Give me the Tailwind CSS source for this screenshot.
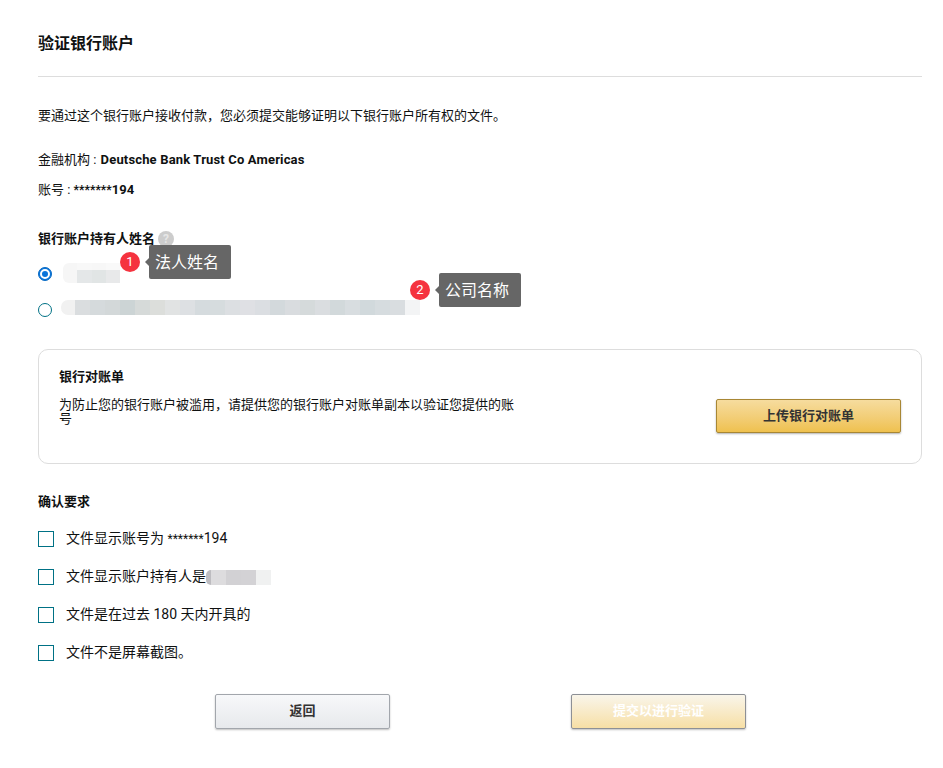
<!DOCTYPE html>
<html lang="zh">
<head>
    <meta charset="UTF-8">
    <meta name="viewport" content="width=device-width, initial-scale=1.0">
    <title>验证银行账户</title>
    <script src="https://cdn.jsdelivr.net/npm/@tailwindcss/browser@4"></script>
</head>
<body class="bg-white text-[#0f1111] font-['Roboto','Noto_Sans_CJK_SC',sans-serif] text-[13px]">
    <div class="relative h-[768px] overflow-hidden pl-[38px] pr-[21px]">
        <!-- Header -->
        <div class="h-[77px] border-b border-[#dddddd] pt-[33px]">
            <h1 class="text-[16px] leading-[22px] font-bold">验证银行账户</h1>
        </div>

        <p class="mt-[29px] leading-[19px]">要通过这个银行账户接收付款，您必须提交能够证明以下银行账户所有权的文件。</p>
        <p class="mt-[25px] leading-[19px]">金融机构 : <b class="ml-px tracking-[0.16px]">Deutsche Bank Trust Co Americas</b></p>
        <p class="mt-[11px] leading-[19px]">账号 : <b><span class="text-[12px]">*******</span>194</b></p>

        <!-- Holder name -->
        <div class="mt-[29px] flex items-center h-[19px]">
            <span class="font-bold">银行账户持有人姓名</span>
            <span class="ml-[3px] w-[16px] h-[16px] rounded-full bg-[#cccccc] text-[#e6e6e6] text-[12px] leading-[16px] font-bold text-center">?</span>
        </div>
        <div class="mt-[8px] h-[35px] flex items-center">
            <span class="w-[14px] h-[14px] rounded-full bg-[#0a74da] border border-[#0a6cc4] flex items-center justify-center">
                <span class="w-[10px] h-[10px] rounded-full border-[2px] border-white bg-[#0a74da]"></span>
            </span>
            <div class="ml-[11px] mb-[2px] flex flex-col">
                <div class="flex h-[7px]">
                    <i class="w-[14px] rounded-tl-[6px] bg-[#f6f6f6]"></i><i class="w-[15px] bg-[#f8f8f8]"></i><i class="w-[14px] bg-[#f7f7f7]"></i><i class="w-[14px] bg-[#f9f9f9]"></i>
                </div>
                <div class="flex h-[13px]">
                    <i class="w-[14px] rounded-bl-[6px] bg-[#f6f6f6]"></i><i class="w-[15px] bg-[#e4e7e8]"></i><i class="w-[14px] bg-[#e1e5e5]"></i><i class="w-[14px] bg-[#e8e9ea]"></i>
                </div>
            </div>
        </div>
        <div class="mt-[1px] h-[35px] flex items-center">
            <span class="w-[14px] h-[14px] rounded-full bg-white border border-[#007185]"></span>
            <div class="ml-[9px] mb-[4px] flex h-[15px]">
                <i class="w-[14px] rounded-l-[7px] bg-[#f1f1f1]"></i><i class="w-[15px] bg-[#dadddf]"></i><i class="w-[15px] bg-[#d5dadc]"></i><i class="w-[15px] bg-[#d3d8d9]"></i><i class="w-[15px] bg-[#ccd4d5]"></i><i class="w-[15px] bg-[#d6dad9]"></i><i class="w-[15px] bg-[#dcdedb]"></i><i class="w-[15px] bg-[#e1e3e3]"></i><i class="w-[15px] bg-[#dde0e3]"></i><i class="w-[15px] bg-[#d5dbde]"></i><i class="w-[15px] bg-[#d6dcde]"></i><i class="w-[15px] bg-[#dcdfe2]"></i><i class="w-[15px] bg-[#dfe0e4]"></i><i class="w-[15px] bg-[#dbdee2]"></i><i class="w-[15px] bg-[#d3d9dc]"></i><i class="w-[15px] bg-[#d9dcdf]"></i><i class="w-[15px] bg-[#d5dadb]"></i><i class="w-[15px] bg-[#dadde0]"></i><i class="w-[15px] bg-[#d2d9db]"></i><i class="w-[15px] bg-[#d8dde0]"></i><i class="w-[15px] bg-[#d1d9dc]"></i><i class="w-[15px] bg-[#d6dcdf]"></i><i class="w-[15px] bg-[#d9dde0]"></i><i class="w-[15px] bg-[#f3f4f5]"></i>
            </div>
        </div>

        <!-- Statement card -->
        <div class="mt-[22px] h-[115px] rounded-[10px] border border-[#dddddd] flex justify-between pl-[20px] pr-[20px]">
            <div class="w-[458px] pt-[17px]">
                <h2 class="font-bold leading-[19px]">银行对账单</h2>
                <p class="mt-[12px] leading-[14px] break-all">为防止您的银行账户被滥用，请提供您的银行账户对账单副本以验证您提供的账号</p>
            </div>
            <button class="mt-[49px] w-[185px] h-[34px] rounded-[2px] border border-[#a88734] bg-linear-to-b from-[#f6dc9e] to-[#efc14e] shadow-[0_1px_2px_rgba(0,0,0,0.3)] font-bold text-[#333333]">上传银行对账单</button>
        </div>

        <!-- Requirements -->
        <h2 class="mt-[28px] font-bold leading-[19px]">确认要求</h2>
        <div class="mt-[9px] flex flex-col text-[14px]">
            <label class="h-[38px] flex items-center">
                <span class="w-[16px] h-[16px] border border-[#007185]"></span>
                <span class="ml-[12px] mb-[2px]">文件显示账号为 <span class="text-[12px]">*******</span>194</span>
            </label>
            <label class="h-[38px] flex items-center">
                <span class="w-[16px] h-[16px] border border-[#007185]"></span>
                <span class="ml-[12px] mb-[2px]">文件显示账户持有人是</span>
                <span class="flex h-[15px]">
                    <i class="w-[5px] rounded-l-[5px] bg-[#bdbcc0]"></i><i class="w-[15px] bg-[#dddcde]"></i><i class="w-[15px] bg-[#d2d1d4]"></i><i class="w-[15px] bg-[#d3d2d5]"></i><i class="w-[15px] bg-[#f0f1f1]"></i>
                </span>
            </label>
            <label class="h-[38px] flex items-center">
                <span class="w-[16px] h-[16px] border border-[#007185]"></span>
                <span class="ml-[12px] mb-[2px]">文件是在过去 180 天内开具的</span>
            </label>
            <label class="h-[38px] flex items-center">
                <span class="w-[16px] h-[16px] border border-[#007185]"></span>
                <span class="ml-[12px] mb-[2px]">文件不是屏幕截图。</span>
            </label>
        </div>

        <!-- Footer buttons -->
        <div class="mt-[22px] pl-[177px] flex gap-[181px]">
            <button class="w-[175px] h-[35px] pb-[2px] rounded-[2px] border border-[#a2a6ac] bg-linear-to-b from-[#f7f8fa] to-[#e7e9ec] shadow-[0_1px_2px_rgba(0,0,0,0.25)] font-bold text-[#333333]">返回</button>
            <button class="w-[175px] h-[35px] pb-[2px] rounded-[2px] border border-[#8d9096] bg-linear-to-b from-[#f9f5ea] to-[#f7dfa5] shadow-[0_1px_2px_rgba(0,0,0,0.25)] font-bold text-white">提交以进行验证</button>
        </div>

        <!-- Annotations on top of the screenshot -->
        <div class="absolute left-[120px] top-[245px] flex items-center">
            <span class="w-[20px] h-[20px] rounded-full bg-[#f5333f] text-white text-[13px] leading-[20px] text-center">1</span>
            <span class="ml-[5px] w-0 h-0 border-y-[4px] border-y-transparent border-r-[4px] border-r-[#666666]"></span>
            <span class="w-[82px] h-[34px] rounded-[2px] bg-[#666666] text-white text-[16px] leading-[36px] pl-[6px]">法人姓名</span>
        </div>
        <div class="absolute left-[410px] top-[273px] flex items-center">
            <span class="w-[20px] h-[20px] rounded-full bg-[#f5333f] text-white text-[13px] leading-[20px] text-center">2</span>
            <span class="ml-[5px] w-0 h-0 border-y-[4px] border-y-transparent border-r-[4px] border-r-[#666666]"></span>
            <span class="w-[82px] h-[34px] rounded-[2px] bg-[#666666] text-white text-[16px] leading-[36px] pl-[6px]">公司名称</span>
        </div>
    </div>
</body>
</html>
